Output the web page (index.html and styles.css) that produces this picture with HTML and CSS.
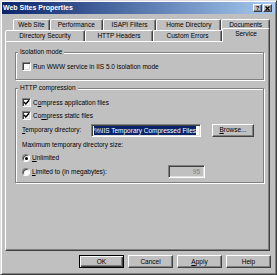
FILE: index.html
```html
<!DOCTYPE html>
<html lang="en">
<head>
    <meta charset="UTF-8">
    <title>Web Sites Properties</title>
    <link rel="stylesheet" href="styles.css">
</head>
<body>
    <div class="window">
        <div class="titlebar">
            <span class="title">Web Sites Properties</span>
            <div class="caption-buttons">
                <span class="cap-btn">?</span>
                <span class="cap-btn">
                    <svg width="5" height="5" viewBox="0 0 5 5"><path d="M0.5 0.5 L4.5 4.5 M4.5 0.5 L0.5 4.5" stroke="#000" stroke-width="1.3"/></svg>
                </span>
            </div>
        </div>

        <div class="tabs">
            <div class="tab-row row-back">
                <div class="tab w-website">Web Site</div>
                <div class="tab w-perf">Performance</div>
                <div class="tab w-isapi">ISAPI Filters</div>
                <div class="tab w-home">Home Directory</div>
                <div class="tab w-docs">Documents</div>
            </div>
            <div class="tab-row row-front">
                <div class="tab w-dirsec">Directory Security</div>
                <div class="tab w-http">HTTP Headers</div>
                <div class="tab w-errors">Custom Errors</div>
                <div class="tab w-service selected">Service</div>
            </div>
        </div>

        <div class="panel">
            <div class="group group-isolation">
                <span class="group-title">Isolation mode</span>
                <div class="check-row first-row">
                    <span class="checkbox"></span>
                    <span>Run WWW service in IIS 5.0 isolation mode</span>
                </div>
            </div>

            <div class="group group-compression">
                <span class="group-title">HTTP compression</span>
                <div class="check-row first-row">
                    <span class="checkbox checked">
                        <svg width="7" height="7" viewBox="0 0 7 7"><polyline points="1,3 2.8,5 6,1.2" fill="none" stroke="#000" stroke-width="1.4"/></svg>
                    </span>
                    <span>C<u>o</u>mpress application files</span>
                </div>
                <div class="check-row second-row">
                    <span class="checkbox checked">
                        <svg width="7" height="7" viewBox="0 0 7 7"><polyline points="1,3 2.8,5 6,1.2" fill="none" stroke="#000" stroke-width="1.4"/></svg>
                    </span>
                    <span>Co<u>m</u>press static files</span>
                </div>
                <div class="dir-row">
                    <span class="dir-label"><u>T</u>emporary directory:</span>
                    <span class="field dir-field"><span class="selection">%\IIS Temporary Compressed Files</span></span>
                    <span class="btn browse-btn"><u>B</u>rowse...</span>
                </div>
                <div class="size-label">Maximum temporary directory size:</div>
                <div class="radio-row unlimited-row">
                    <span class="radio on"></span>
                    <span><u>U</u>nlimited</span>
                </div>
                <div class="radio-row limited-row">
                    <span class="radio"></span>
                    <span class="limited-label"><u>L</u>imited to (in megabytes):</span>
                    <span class="field size-field disabled">95</span>
                </div>
            </div>
        </div>

        <div class="dialog-buttons">
            <span class="btn default">OK</span>
            <span class="btn">Cancel</span>
            <span class="btn"><u>A</u>pply</span>
            <span class="btn">Help</span>
        </div>
    </div>
</body>
</html>
```

FILE: styles.css
```css
body {
    margin: 0;
    font-family: "Liberation Sans", Arial, sans-serif;
    font-size: 6.5px;
    line-height: 8px;
    color: #000;
}

.window {
    width: 277px;
    height: 275px;
    box-sizing: border-box;
    background: #c0c0c0;
    border: 1px solid;
    border-color: #dfdfdf #404040 #404040 #dfdfdf;
    box-shadow: inset 1px 1px #fff, inset -1px -1px #808080;
    padding: 1px;
    display: flex;
    flex-direction: column;
}

/* title bar */
.titlebar {
    height: 12px;
    flex-shrink: 0;
    background: linear-gradient(90deg, #0a246a, #a6caf0);
    display: flex;
    align-items: center;
    justify-content: space-between;
    padding: 0 3px 0 1px;
}

.title {
    color: #fff;
    font-weight: bold;
    font-size: 7px;
}

.caption-buttons {
    display: flex;
    gap: 1px;
}

.cap-btn {
    width: 9px;
    height: 8px;
    box-sizing: border-box;
    background: #c0c0c0;
    border: 1px solid;
    border-color: #fff #404040 #404040 #fff;
    box-shadow: inset -1px -1px #808080;
    display: flex;
    align-items: center;
    justify-content: center;
    font-weight: bold;
    font-size: 6px;
    line-height: 6px;
}

/* tabs */
.tabs {
    margin: 5px 5px 0 3px;
    display: flex;
    flex-direction: column;
    flex-shrink: 0;
}

.tab-row {
    display: flex;
}

.row-back {
    margin-left: 8px;
}

.row-front {
    margin-top: -2px;
    align-items: flex-end;
}

.tab {
    height: 11px;
    box-sizing: border-box;
    border: 1px solid;
    border-bottom: none;
    border-color: #fff #404040 transparent #fff;
    border-radius: 2px 2px 0 0;
    box-shadow: inset -1px 0 #808080;
    background: #c0c0c0;
    display: flex;
    align-items: center;
    justify-content: center;
    white-space: nowrap;
}

.tab.selected {
    height: 14px;
    padding-bottom: 3px;
    margin-bottom: -1px;
    position: relative;
    z-index: 1;
}

.w-website { width: 37px; }
.w-perf { width: 53px; }
.w-isapi { width: 54px; }
.w-home { width: 65px; }
.w-docs { width: 49px; }
.w-dirsec { width: 80px; }
.w-http { width: 68px; }
.w-errors { width: 69px; }
.w-service { width: 48px; }

/* property page */
.panel {
    flex: 1;
    margin: 0 5px 0 3px;
    border: 1px solid;
    border-color: #fff #404040 #404040 #fff;
    box-shadow: inset -1px -1px #808080;
    padding: 10px 5px 0 9px;
    display: flex;
    flex-direction: column;
}

.group {
    border: 1px solid #808080;
    box-shadow: inset 1px 1px #fff, 1px 1px #fff;
    padding: 0 6px;
    display: flex;
    flex-direction: column;
    align-items: flex-start;
}

.group-title {
    margin: -5px 0 0 -4px;
    padding: 0 2px;
    background: #c0c0c0;
    height: 8px;
}

.group-isolation {
    padding-bottom: 8px;
}

.group-compression {
    margin-top: 8px;
    padding-bottom: 4px;
}

.check-row,
.radio-row {
    display: flex;
    align-items: center;
    white-space: nowrap;
}

.check-row {
    height: 9px;
    gap: 2px;
}

.first-row { margin-top: 6px; }
.second-row { margin-top: 4px; }

.checkbox {
    width: 9px;
    height: 9px;
    box-sizing: border-box;
    background: #fff;
    border: 1px solid;
    border-color: #808080 #fff #fff #808080;
    box-shadow: inset 1px 1px #404040, inset -1px -1px #dfdfdf;
    display: flex;
    align-items: center;
    justify-content: center;
}

.dir-row {
    margin-top: 3px;
    height: 14px;
    display: flex;
    align-items: center;
}

.dir-label {
    width: 69px;
    white-space: nowrap;
}

.field {
    height: 13px;
    box-sizing: border-box;
    background: #fff;
    border: 1px solid;
    border-color: #808080 #fff #fff #808080;
    box-shadow: inset 1px 1px #404040, inset -1px -1px #dfdfdf;
    display: flex;
    align-items: center;
    white-space: nowrap;
    overflow: hidden;
}

.dir-field {
    width: 110px;
    padding-left: 2px;
}

.selection {
    background: #0a246a;
    color: #fff;
    line-height: 9px;
}

.btn {
    width: 45px;
    height: 13px;
    box-sizing: border-box;
    background: #c0c0c0;
    border: 1px solid;
    border-color: #fff #404040 #404040 #fff;
    box-shadow: inset -1px -1px #808080;
    display: flex;
    align-items: center;
    justify-content: center;
    white-space: nowrap;
}

.btn.default {
    border-color: #000;
    box-shadow: inset 1px 1px #fff, inset -1px -1px #404040, inset -2px -2px #808080;
}

.browse-btn {
    width: 42px;
    margin-left: 11px;
}

.size-label {
    margin-top: 4px;
    height: 8px;
    white-space: nowrap;
}

.radio-row {
    gap: 2px;
}

.unlimited-row {
    margin-top: 5px;
    height: 8px;
}

.limited-row {
    margin-top: 3px;
    height: 13px;
}

.radio {
    width: 8px;
    height: 8px;
    box-sizing: border-box;
    border-radius: 50%;
    background: #fff;
    border: 1px solid;
    border-color: #808080 #fff #fff #808080;
    box-shadow: inset 1px 1px #404040;
    display: flex;
    align-items: center;
    justify-content: center;
}

.radio.on::after {
    content: "";
    width: 3px;
    height: 3px;
    border-radius: 50%;
    background: #000;
}

.limited-label {
    width: 134px;
}

.size-field {
    width: 37px;
    justify-content: flex-end;
    padding-right: 4px;
}

.size-field.disabled {
    background: #c0c0c0;
    color: #808080;
}

/* OK / Cancel row */
.dialog-buttons {
    display: flex;
    justify-content: flex-end;
    gap: 4px;
    margin: 4px 4px 5px 0;
    flex-shrink: 0;
}
```
